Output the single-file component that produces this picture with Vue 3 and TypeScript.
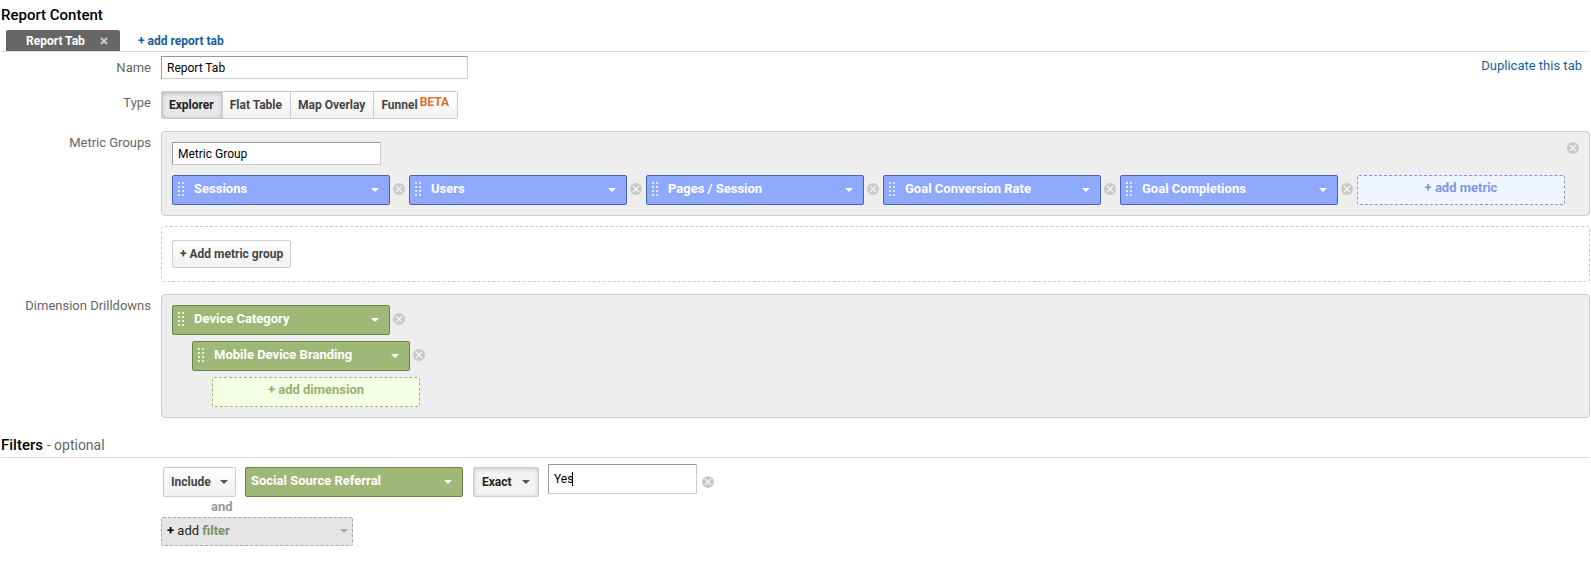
<script setup lang="ts">
import { ref } from 'vue'

interface ReportType {
  id: string
  label: string
  beta?: boolean
}

const tabName = ref('Report Tab')
const groupName = ref('Metric Group')
const reportType = ref('explorer')
const filterValue = ref('Yes')

const reportTypes: ReportType[] = [
  { id: 'explorer', label: 'Explorer' },
  { id: 'flat', label: 'Flat Table' },
  { id: 'map', label: 'Map Overlay' },
  { id: 'funnel', label: 'Funnel', beta: true },
]

const metrics = ref<string[]>(['Sessions', 'Users', 'Pages / Session', 'Goal Conversion Rate', 'Goal Completions'])
const dimensions = ref<string[]>(['Device Category', 'Mobile Device Branding'])

function removeFrom(list: string[], index: number): void {
  list.splice(index, 1)
}
</script>

<template>
  <svg class="defs" width="0" height="0" aria-hidden="true">
    <symbol id="icon-remove" viewBox="0 0 12 12">
      <circle cx="6" cy="6" r="6" fill="#c9c9c9" />
      <path d="M3 3L9 9M9 3L3 9" stroke="#f4f4f4" stroke-width="1.3" />
    </symbol>
    <symbol id="icon-caret" viewBox="0 0 8 4">
      <path d="M0 0H8L4 4Z" fill="currentColor" />
    </symbol>
    <symbol id="icon-grip" viewBox="0 0 6 14">
      <path
        d="M0 0h2v2H0zM4 0h2v2H4zM0 4h2v2H0zM4 4h2v2H4zM0 8h2v2H0zM4 8h2v2H4zM0 12h2v2H0zM4 12h2v2H4z"
        fill="#fff"
        fill-opacity="0.75"
      />
    </symbol>
  </svg>

  <main class="report">
    <h2 class="heading">Report Content</h2>
    <div class="tabs">
      <div class="tab">
        <button class="tab-name" type="button">Report Tab</button>
        <button class="tab-close" type="button" aria-label="Close tab">
          <svg width="8" height="8" viewBox="0 0 8 8">
            <path d="M1 1L7 7M7 1L1 7" stroke="#ccc" stroke-width="2" />
          </svg>
        </button>
      </div>
      <button class="add-tab" type="button">+ add report tab</button>
    </div>

    <div class="row name-row">
      <label class="label" for="tab-name">Name</label>
      <input id="tab-name" v-model="tabName" class="text wide" type="text" />
      <a class="duplicate" href="#">Duplicate this tab</a>
    </div>

    <div class="row type-row">
      <span id="type-label" class="label">Type</span>
      <div class="segments" role="radiogroup" aria-labelledby="type-label">
        <label v-for="t in reportTypes" :key="t.id" class="segment" :class="{ active: reportType === t.id }">
          <input v-model="reportType" type="radio" name="report-type" :value="t.id" />
          <span>{{ t.label }}</span>
          <span v-if="t.beta" class="beta">BETA</span>
        </label>
      </div>
    </div>

    <div class="row metric-row">
      <span class="label">Metric Groups</span>
      <div class="stack">
        <section class="panel" aria-label="Metric group">
          <div class="panel-head">
            <input v-model="groupName" class="text group" type="text" aria-label="Metric group name" />
            <button class="remove" type="button" aria-label="Remove metric group">
              <svg width="12" height="12"><use href="#icon-remove" /></svg>
            </button>
          </div>
          <div class="metrics">
            <div v-for="(m, i) in metrics" :key="m" class="item">
              <div class="chip blue">
                <select :aria-label="`Metric ${i + 1}`">
                  <option>{{ m }}</option>
                </select>
                <svg class="grip" width="6" height="14"><use href="#icon-grip" /></svg>
                <svg class="caret" width="8" height="4"><use href="#icon-caret" /></svg>
              </div>
              <button class="remove" type="button" :aria-label="`Remove ${m}`" @click="removeFrom(metrics, i)">
                <svg width="12" height="12"><use href="#icon-remove" /></svg>
              </button>
            </div>
            <button class="add add-metric" type="button">+ add metric</button>
          </div>
        </section>
        <div class="new-group">
          <button class="button" type="button">+ Add metric group</button>
        </div>
      </div>
    </div>

    <div class="row drill-row">
      <span class="label">Dimension Drilldowns</span>
      <section class="panel drill" aria-label="Dimension drilldowns">
        <div v-for="(d, i) in dimensions" :key="d" class="item" :class="`level-${i}`">
          <div class="chip green">
            <select :aria-label="`Dimension ${i + 1}`">
              <option>{{ d }}</option>
            </select>
            <svg class="grip" width="6" height="14"><use href="#icon-grip" /></svg>
            <svg class="caret" width="8" height="4"><use href="#icon-caret" /></svg>
          </div>
          <button class="remove" type="button" :aria-label="`Remove ${d}`" @click="removeFrom(dimensions, i)">
            <svg width="12" height="12"><use href="#icon-remove" /></svg>
          </button>
        </div>
        <button class="add add-dimension level-2" type="button">+ add dimension</button>
      </section>
    </div>

    <h2 class="heading filters-heading">Filters <span class="optional">- optional</span></h2>
    <div class="filters">
      <div class="filter-row">
        <div class="picker include">
          <select aria-label="Include or exclude">
            <option>Include</option>
            <option>Exclude</option>
          </select>
          <svg class="caret" width="8" height="4"><use href="#icon-caret" /></svg>
        </div>
        <div class="chip green plain">
          <select aria-label="Filter dimension">
            <option>Social Source Referral</option>
          </select>
          <svg class="caret" width="8" height="4"><use href="#icon-caret" /></svg>
        </div>
        <div class="picker exact">
          <select aria-label="Match type">
            <option>Exact</option>
            <option>Regex</option>
          </select>
          <svg class="caret" width="8" height="4"><use href="#icon-caret" /></svg>
        </div>
        <div class="value">
          <input v-model="filterValue" class="text" type="text" aria-label="Filter value" />
          <span class="cursor" aria-hidden="true"></span>
        </div>
        <button class="remove" type="button" aria-label="Remove filter">
          <svg width="12" height="12"><use href="#icon-remove" /></svg>
        </button>
      </div>
      <span class="and">and</span>
      <button class="add-filter" type="button">
        <span><b class="plus">+</b> add <b>filter</b></span>
        <svg width="8" height="4"><use href="#icon-caret" /></svg>
      </button>
    </div>
  </main>
</template>

<style>
body {
  background: #fff;
}
</style>

<style scoped>
.defs {
  position: absolute;
}
.report,
.report * {
  box-sizing: border-box;
}
.report {
  padding: 5px 1px 14px;
  font: 13px/20px Roboto, 'Liberation Sans', sans-serif;
  color: #666;
}
button,
input,
select {
  margin: 0;
  font: inherit;
  border-radius: 0;
}
button,
select {
  padding: 0;
  border: 0;
  background: none;
  color: inherit;
  cursor: pointer;
}
select {
  appearance: none;
  outline: none;
}
.heading {
  margin: 0;
  font-size: 15px;
  line-height: 20px;
  font-weight: 500;
  color: #000;
}
.tabs {
  display: flex;
  align-items: flex-end;
  height: 27px;
  padding-left: 5px;
  border-bottom: 1px solid #ddd;
}
.tab {
  display: flex;
  align-items: center;
  justify-content: space-between;
  width: 114px;
  height: 21px;
  padding: 0 12px 0 20px;
  border-radius: 2px 2px 0 0;
  background: #666;
  color: #fff;
  font-size: 12px;
  font-weight: 700;
}
.tab-close {
  display: flex;
}
.add-tab {
  margin-left: 18px;
  color: #15609b;
  font-size: 12px;
  font-weight: 700;
}
.row {
  display: flex;
  align-items: flex-start;
}
.label {
  flex: none;
  width: 150px;
  margin-right: 10px;
  padding-top: 2px;
  text-align: right;
}
.name-row {
  padding-top: 4px;
}
.text {
  height: 23px;
  padding: 1px 5px;
  border: 1px solid #ccc;
  border-top-color: #999;
  border-left-color: #999;
  background: #fff;
  color: #000;
  font-size: 12px;
  outline: none;
}
.wide {
  width: 307px;
}
.duplicate {
  margin-left: auto;
  padding-right: 8px;
  color: #15609b;
  text-decoration: none;
}
.type-row {
  margin-top: 12px;
}
.segments {
  display: flex;
  border: 1px solid #ccc;
  border-radius: 2px;
}
.segment {
  position: relative;
  display: flex;
  height: 26px;
  padding: 3px 8px 3px 7px;
  background: linear-gradient(#fff, #f1f1f1);
  color: #444;
  font-size: 12px;
  font-weight: 700;
  cursor: pointer;
}
.segment + .segment {
  border-left: 1px solid #ccc;
}
.segment input {
  position: absolute;
  opacity: 0;
}
.segment.active {
  background: #e8e8e8;
  box-shadow: inset 0 1px 4px rgba(0, 0, 0, 0.25);
  color: #222;
}
.beta {
  margin: -3px 0 0 2px;
  color: #dd6f2b;
}
.metric-row {
  margin-top: 12px;
}
.stack {
  flex: 1;
}
.panel {
  padding: 10px 24px 10px 10px;
  border: 1px solid #ccc;
  border-radius: 4px;
  background: #eee;
}
.panel-head {
  display: flex;
  justify-content: space-between;
  align-items: flex-start;
  margin: 0 -14px 10px 0;
}
.group {
  width: 209px;
}
.remove {
  display: flex;
  flex: none;
}
.metrics {
  display: flex;
  flex-wrap: wrap;
  row-gap: 6px;
}
.item {
  display: flex;
  align-items: center;
  gap: 3px;
  width: 237px;
}
.item .remove {
  padding-bottom: 2px;
}
.chip {
  position: relative;
  width: 218px;
  height: 30px;
  border: 1px solid;
  border-radius: 2px;
  color: #fff;
}
.chip select {
  width: 100%;
  height: 100%;
  padding: 0 28px 3px 21px;
  font-weight: 700;
}
.chip.plain select {
  padding-left: 5px;
}
.blue {
  border-color: #4a63b0;
  background: #8faafc;
}
.green {
  border-color: #6c8348;
  background: #9fb777;
}
.grip {
  position: absolute;
  top: 6px;
  left: 5px;
  pointer-events: none;
}
.caret {
  position: absolute;
  top: 12px;
  right: 10px;
  pointer-events: none;
}
.add {
  width: 208px;
  height: 30px;
  padding-bottom: 4px;
  border: 1px dashed;
  border-radius: 2px;
  font-weight: 700;
}
.add-metric {
  border-color: #7d98e8;
  background: #f0f6ff;
  color: #7d98e8;
}
.add-dimension {
  border-color: #9fb777;
  background: #f3ffe2;
  color: #98ae72;
}
.new-group {
  margin-top: 10px;
  padding: 13px 10px;
  border: 1px dashed #ccc;
  border-radius: 4px;
}
.button {
  display: block;
  height: 28px;
  padding: 0 7px;
  border: 1px solid #ccc;
  border-radius: 2px;
  background: linear-gradient(#fff, #f1f1f1);
  color: #444;
  font-size: 12px;
  font-weight: 700;
}
.drill-row {
  margin-top: 12px;
}
.drill {
  display: flex;
  flex: 1;
  flex-direction: column;
  align-items: flex-start;
  gap: 6px;
}
.level-1 {
  margin-left: 20px;
}
.level-2 {
  margin-left: 40px;
}
.filters-heading {
  margin-top: 17px;
  padding-bottom: 2px;
  border-bottom: 1px solid #ddd;
}
.optional {
  color: #666;
  font-size: 14px;
  font-weight: 400;
}
.filters {
  display: flex;
  flex-direction: column;
  align-items: flex-start;
  padding: 6px 0 0 160px;
}
.filter-row {
  display: flex;
  align-items: center;
  padding-left: 2px;
}
.filter-row .picker,
.filter-row .chip,
.filter-row .remove {
  margin-top: 3px;
}
.picker {
  position: relative;
  height: 30px;
  border: 1px solid #ccc;
  border-radius: 2px;
  background: linear-gradient(#fff, #f1f1f1);
  color: #444;
  font-size: 12px;
  font-weight: 700;
}
.picker select {
  width: 100%;
  height: 100%;
  padding-left: 7px;
}
.picker .caret {
  right: 7px;
  color: #555;
}
.include {
  width: 73px;
  margin-right: 9px;
}
.exact {
  width: 66px;
  margin: 0 9px 0 10px;
  background: #f3f3f3;
  box-shadow: inset 0 1px 4px rgba(0, 0, 0, 0.2);
  color: #222;
}
.exact select {
  padding-left: 8px;
}
.exact .caret {
  right: 8px;
}
.value {
  position: relative;
  align-self: flex-start;
  margin-right: 5px;
}
.value .text {
  display: block;
  width: 149px;
  height: 30px;
}
.cursor {
  position: absolute;
  top: 8px;
  left: 24px;
  width: 1px;
  height: 14px;
  background: #000;
}
.and {
  margin-left: 50px;
  color: #999;
  font-weight: 700;
}
.add-filter {
  display: flex;
  align-items: center;
  justify-content: space-between;
  width: 192px;
  height: 29px;
  padding: 0 4px 2px 5px;
  border: 1px dashed #aaa;
  border-radius: 2px;
  background: #e5e5e5;
  color: #222;
}
.add-filter b {
  color: #7a8f6c;
}
.add-filter .plus {
  color: #000;
}
.add-filter svg {
  color: #aaa;
}
</style>
